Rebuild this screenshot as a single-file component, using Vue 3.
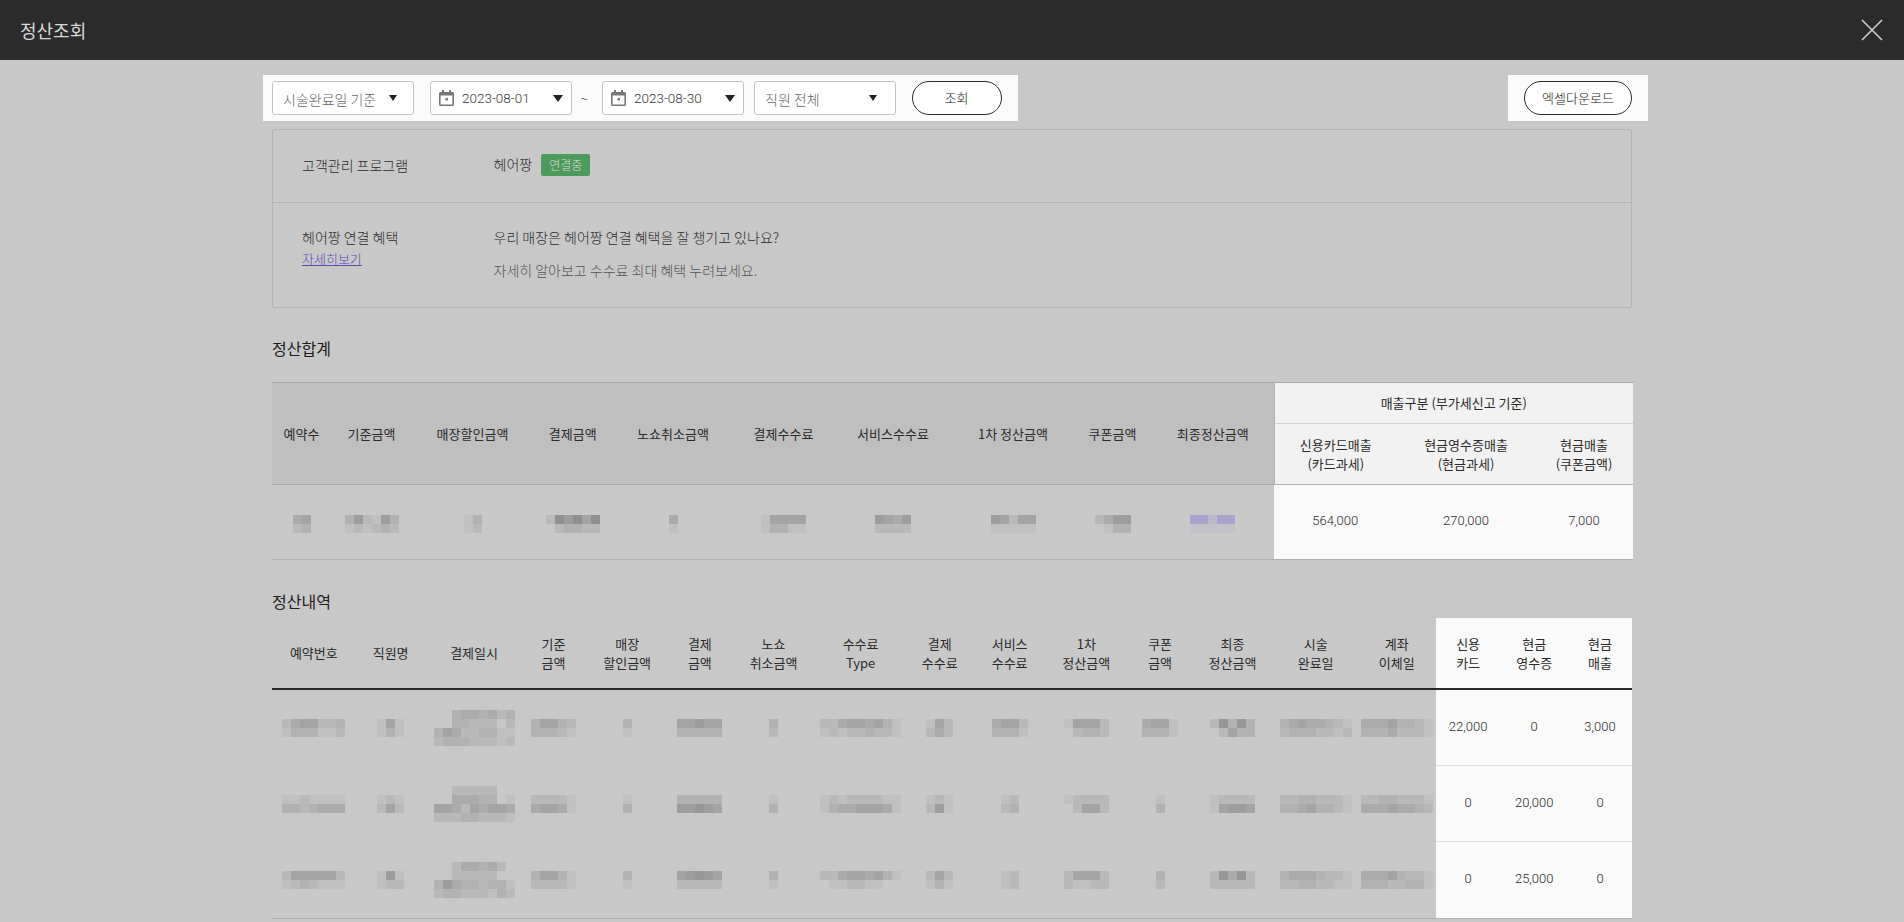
<template>
  <div class="settle-page">
    <header class="settle-head">
      <h1 class="settle-title">정산조회</h1>
      <button class="close-btn" aria-label="닫기">
        <svg width="22" height="22" viewBox="0 0 22 22">
          <path d="M1 1 L21 21 M21 1 L1 21" fill="none" stroke="#cfcfcf" stroke-width="1.6" />
        </svg>
      </button>
    </header>

    <main class="settle-body">
      <div class="filter-bar">
        <div class="spot spot-left">
          <div class="field field-select wide-gap">
            <span class="placeholder">시술완료일 기준</span>
            <i class="caret small"></i>
          </div>
          <div class="date-range">
            <div class="field field-date">
              <svg class="cal" width="15" height="16" viewBox="0 0 15 16">
                <path fill="#777" d="M3 0h2v2h5V0h2v2h1.500A1.500 1.500 0 0 1 15 3.500v11a1.500 1.500 0 0 1-1.500 1.500h-12A1.500 1.500 0 0 1 0 14.500v-11A1.500 1.500 0 0 1 1.500 2H3zM1.600 5.500v8.900h11.800V5.500z" />
                <rect x="6.500" y="8" width="2.500" height="2.500" fill="#777" />
              </svg>
              <span class="date-text">2023-08-01</span>
              <i class="caret"></i>
            </div>
            <span class="tilde">~</span>
            <div class="field field-date">
              <svg class="cal" width="15" height="16" viewBox="0 0 15 16">
                <path fill="#777" d="M3 0h2v2h5V0h2v2h1.500A1.500 1.500 0 0 1 15 3.500v11a1.500 1.500 0 0 1-1.500 1.500h-12A1.500 1.500 0 0 1 0 14.500v-11A1.500 1.500 0 0 1 1.500 2H3zM1.600 5.500v8.900h11.800V5.500z" />
                <rect x="6.500" y="8" width="2.500" height="2.500" fill="#777" />
              </svg>
              <span class="date-text">2023-08-30</span>
              <i class="caret"></i>
            </div>
          </div>
          <div class="field field-select staff">
            <span class="placeholder">직원 전체</span>
            <i class="caret small"></i>
          </div>
          <button class="pill search">조회</button>
        </div>
        <div class="spot spot-right">
          <button class="pill excel">엑셀다운로드</button>
        </div>
      </div>

      <section class="info-box">
        <div class="info-row first">
          <div class="info-label">고객관리 프로그램</div>
          <div class="info-value">
            헤어짱
            <span class="badge">연결중</span>
          </div>
        </div>
        <div class="info-row second">
          <div class="info-label">
            <div>헤어짱 연결 혜택</div>
            <a class="more-link" href="#">자세히보기</a>
          </div>
          <div class="info-value">
            <div class="benefit">우리 매장은 헤어짱 연결 혜택을 잘 챙기고 있나요?</div>
            <div class="benefit-sub">자세히 알아보고 수수료 최대 혜택 누려보세요.</div>
          </div>
        </div>
      </section>

      <h2 class="section-title">정산합계</h2>
      <table class="grid summary">
        <colgroup>
          <col v-for="(w, i) in summaryCols" :key="i" :style="{ width: w + 'px' }" />
        </colgroup>
        <thead>
          <tr class="sum-top">
            <th v-for="h in summaryHead" :key="h" rowspan="2">{{ h }}</th>
            <th colspan="3" class="lit-head first-lit">매출구분 (부가세신고 기준)</th>
          </tr>
          <tr class="sum-sub">
            <th class="lit-head first-lit">신용카드매출<br />(카드과세)</th>
            <th class="lit-head">현금영수증매출<br />(현금과세)</th>
            <th class="lit-head">현금매출<br />(쿠폰금액)</th>
          </tr>
        </thead>
        <tbody>
          <tr>
            <td v-for="(m, i) in summaryBlur" :key="i" class="blur-cell">
              <div class="mosaic">
                <div v-for="(r, ri) in m.rows" :key="ri" class="mosaic-row">
                  <span v-for="(c, ci) in r" :key="ci" class="tile" :style="{ background: tileColor(c, m.tint) }"></span>
                </div>
              </div>
            </td>
            <td class="lit-cell">564,000</td>
            <td class="lit-cell">270,000</td>
            <td class="lit-cell">7,000</td>
          </tr>
        </tbody>
      </table>

      <h2 class="section-title detail-title">정산내역</h2>
      <table class="grid detail">
        <colgroup>
          <col v-for="(w, i) in detailCols" :key="i" :style="{ width: w + 'px' }" />
        </colgroup>
        <thead>
          <tr>
            <th v-for="h in detailHead" :key="h[0]">{{ h[0] }}<template v-if="h[1]"><br />{{ h[1] }}</template></th>
            <th class="lit-white">신용<br />카드</th>
            <th class="lit-white">현금<br />영수증</th>
            <th class="lit-white">현금<br />매출</th>
          </tr>
        </thead>
        <tbody>
          <tr v-for="(row, ri) in detailRows" :key="ri">
            <td v-for="(m, i) in row.blur" :key="i">
              <div class="mosaic">
                <div v-for="(r, rr) in m" :key="rr" class="mosaic-row">
                  <span v-for="(c, ci) in r" :key="ci" class="tile" :style="{ background: tileColor(c) }"></span>
                </div>
              </div>
            </td>
            <td v-for="(n, i) in row.nums" :key="'n' + i" class="lit-cell">{{ n }}</td>
          </tr>
        </tbody>
      </table>
    </main>
  </div>
</template>

<script setup>
const summaryCols = [59, 81, 121, 79.5, 121, 100, 119, 121, 78, 122.5, 122.5, 139, 97]
const summaryHead = ['예약수', '기준금액', '매장할인금액', '결제금액', '노쇼취소금액', '결제수수료', '서비스수수료', '1차 정산금액', '쿠폰금액', '최종정산금액']

// 모자이크 처리된 값: 숫자는 진하기 단계
const summaryBlur = [
  { rows: ['45', '23'] },
  { rows: ['362163', '121232'] },
  { rows: ['13', '12'] },
  { rows: ['286858', '023322'] },
  { rows: ['4', '1'] },
  { rows: ['15555', '13311'] },
  { rows: ['6546', '2222'] },
  { rows: ['65255', '11111'] },
  { rows: ['2466', '0133'] },
  { rows: ['88388', '11111'], tint: '93,67,227' }
]

const detailCols = [83.6, 70, 96.8, 61.8, 85.6, 59.8, 87.6, 86.4, 71.8, 68, 85.2, 62.4, 82.4, 83.8, 78.2, 64.6, 67.6, 63.8]
const detailHead = [
  ['예약번호'], ['직원명'], ['결제일시'], ['기준', '금액'], ['매장', '할인금액'], ['결제', '금액'], ['노쇼', '취소금액'],
  ['수수료', 'Type'], ['결제', '수수료'], ['서비스', '수수료'], ['1차', '정산금액'], ['쿠폰', '금액'], ['최종', '정산금액'], ['시술', '완료일'], ['계좌', '이체일']
]

const detailRows = [
  {
    blur: [
      ['2455223', '1333112'], ['151', '131'],
      ['003443423', '003322202', '354223311', '233322212'],
      ['35532', '33321'], ['3', '1'], ['55655', '33333'], ['3', '2'],
      ['224554531', '121223221'], ['152', '242'], ['4552', '3331'],
      ['15552', '02332'], ['4551', '3331'], ['27373', '02533'],
      ['34544321', '23332212'], ['44453321', '33342221']
    ],
    nums: ['22,000', '0', '3,000']
  },
  {
    blur: [
      ['1121111', '3323444'], ['121', '252'],
      ['002222200', '004443301', '554254554', '222332221'],
      ['22221', '45541'], ['1', '3'], ['33333', '66765'], ['1', '3'],
      ['121222211', '134455541'], ['121', '261'], ['12', '23'],
      ['12222', '02552'], ['1', '3'], ['12222', '15665'],
      ['22332221', '33453321'], ['22332221', '44454432']
    ],
    nums: ['0', '20,000', '0']
  },
  {
    blur: [
      ['2555552', '1232111'], ['161', '122'],
      ['002443420', '002222200', '364332331', '233222132'],
      ['35531', '22221'], ['3', '1'], ['56765', '22222'], ['3', '1'],
      ['224554531', '011221100'], ['252', '131'], ['12', '12'],
      ['25552', '21122'], ['3', '2'], ['27472', '22222'],
      ['34443221', '22332211'], ['44453221', '33322331']
    ],
    nums: ['0', '25,000', '0']
  }
]

const tileColor = (c, tint) => {
  const rgb = tint || '0,0,0'
  return `rgba(${rgb},${Number(c) * 0.035})`
}
</script>

<style>
html,
body {
  margin: 0;
  height: 922px;
  overflow: hidden;
  background: #c8c8c8;
}
</style>

<style scoped>
.settle-page {
  height: 922px;
  overflow: hidden;
  background: #c8c8c8;
  color: #2a2a2a;
  font-family: "Noto Sans CJK KR", "Noto Sans", sans-serif;
  font-size: 14px;
  font-weight: 300;
}

.settle-head {
  height: 60px;
  background: #2b2b2b;
  display: flex;
  align-items: center;
  justify-content: space-between;
  padding: 0 21px 0 20px;
}

.settle-title {
  margin: 0;
  font-size: 18px;
  font-weight: 400;
  color: #d8d8d8;
}

.close-btn {
  padding: 0;
  border: none;
  background: none;
  display: flex;
  cursor: pointer;
}

.settle-body {
  width: 1360px;
  margin: 0 auto;
}

.filter-bar {
  display: flex;
  justify-content: space-between;
  padding-top: 15px;
  margin-bottom: 8px;
}

.spot {
  background: #fbfbfb;
  padding: 6px 16px;
  display: flex;
  align-items: center;
}

.spot-left {
  margin-left: -9px;
  padding-left: 9px;
}

.spot-right {
  margin-right: -16px;
}

.field {
  box-sizing: border-box;
  width: 141.500px;
  height: 34px;
  border: 1px solid #c4c4c4;
  border-radius: 3px;
  background: #fff;
  display: flex;
  align-items: center;
  flex: none;
}

.field-select {
  padding: 2px 16px 0 10px;
  justify-content: space-between;
}

.wide-gap {
  margin-right: 16.500px;
}

.staff {
  margin-left: 10.500px;
  margin-right: 16px;
  padding-right: 18px;
}

.placeholder {
  color: #666;
}

.field-date {
  padding: 0 8px;
}

.date-range {
  display: flex;
  align-items: center;
}

.date-text {
  margin-left: 8px;
  font-family: Roboto, "Noto Sans", sans-serif;
  font-size: 13.500px;
  color: #3a3a3a;
  flex: 1;
}

.tilde {
  box-sizing: border-box;
  width: 30.500px;
  padding-right: 5px;
  text-align: center;
  font-size: 14px;
  color: #444;
}

.cal {
  flex: none;
}

.caret {
  width: 0;
  height: 0;
  border-left: 5.500px solid transparent;
  border-right: 5.500px solid transparent;
  border-top: 7px solid #222;
}

.caret.small {
  margin-top: -2px;
  border-left-width: 4px;
  border-right-width: 4px;
  border-top-width: 6px;
}

.pill {
  height: 34px;
  padding: 0 0 2px;
  background: #fff;
  border: 1px solid #2a2a2a;
  border-radius: 17px;
  font-family: inherit;
  font-size: 13px;
  font-weight: 300;
  color: #222;
  cursor: pointer;
}

.search {
  width: 90px;
}

.excel {
  width: 108px;
}

.info-box {
  box-sizing: border-box;
  height: 179px;
  border: 1px solid #b4b4b4;
  border-radius: 2px;
}

.info-row {
  display: flex;
  padding-left: 29px;
}

.info-row.first {
  box-sizing: border-box;
  height: 73px;
  padding-bottom: 2px;
  align-items: center;
  border-bottom: 1px solid #b4b4b4;
}

.info-row.second {
  padding-top: 24px;
}

.info-label {
  width: 191.500px;
  flex: none;
  line-height: 20px;
}

.info-value {
  line-height: 20px;
}

.badge {
  display: inline-block;
  width: 49px;
  height: 22px;
  margin-left: 6px;
  border-radius: 2px;
  background: #4c9a5c;
  color: #dcdcdc;
  font-size: 12px;
  line-height: 22px;
  text-align: center;
}

.more-link {
  display: inline-block;
  margin-top: 2px;
  font-size: 13px;
  color: #5a49b8;
  text-decoration: underline;
}

.benefit-sub {
  margin-top: 13px;
  color: #555;
}

.section-title {
  margin: 28px 0 22px;
  font-size: 16px;
  font-weight: 400;
  line-height: 24px;
  color: #1c1c1c;
}

.detail-title {
  margin-top: 29px;
  margin-bottom: 5px;
}

.grid {
  width: 1360px;
  table-layout: fixed;
  border-collapse: separate;
  border-spacing: 0;
  font-size: 13px;
  text-align: center;
}

.grid th {
  box-sizing: border-box;
  padding: 0;
  font-weight: 400;
  line-height: 19.500px;
  color: #2a2a2a;
}

.grid td {
  box-sizing: border-box;
  padding: 0;
}

.summary {
  border-top: 1px solid #a8a8a8;
}

.summary thead th {
  background: #bfbfbf;
  border-bottom: 1px solid #a8a8a8;
}

.summary .sum-top {
  height: 41px;
}

.summary .sum-sub {
  height: 61px;
}

.summary th.lit-head {
  background: #f2f2f2;
  border-bottom: 1px solid #d2d2d2;
}

.summary .sum-sub th.lit-head {
  border-bottom: 1px solid #b2b2b2;
}

.summary th.first-lit {
  border-left: 1px solid #b0b0b0;
}

.summary td {
  height: 75px;
  border-bottom: 1px solid #b0b0b0;
}

.blur-cell {
  padding-top: 4px !important;
}

.mosaic {
  display: flex;
  flex-direction: column;
  align-items: center;
  filter: blur(0.5px);
}

.mosaic-row {
  display: flex;
  height: 9px;
}

.tile {
  width: 9px;
  height: 9px;
}

.lit-cell {
  background: #fafafa;
  color: #2a2a2a;
  font-family: Roboto, "Noto Sans", sans-serif;
  padding-bottom: 3px !important;
}

.detail {
  border-bottom: 1px solid #b0b0b0;
}

.detail thead th {
  height: 72px;
  border-bottom: 2px solid #2a2a2a;
}

.detail thead th.lit-white {
  background: #fafafa;
}

.detail td {
  height: 76px;
  border-bottom: 1px solid #c5c5c5;
}

.detail td.lit-cell {
  border-bottom-color: #e0e0e0;
}

.detail tr:last-child td {
  border-bottom: none;
}
</style>
